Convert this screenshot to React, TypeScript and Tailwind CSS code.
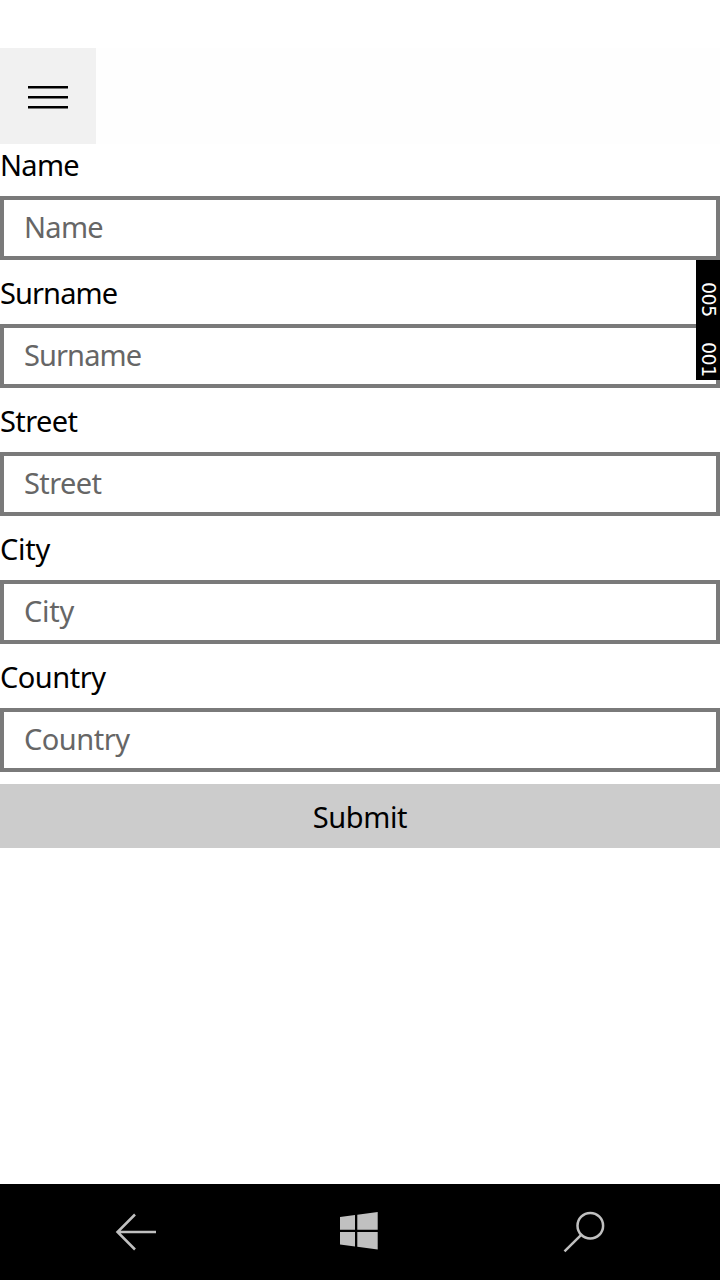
const FIELDS = [
  { label: "Name", tracking: "tracking-[-0.7px]" },
  { label: "Surname", tracking: "tracking-[-0.9px]" },
  { label: "Street", tracking: "tracking-[-0.6px]" },
  { label: "City", tracking: "tracking-[-0.3px]" },
  { label: "Country", tracking: "tracking-[-0.5px]" },
];

function Field({ label, tracking }: { label: string; tracking: string }) {
  return (
    <label className={`block h-32 text-[29px] ${tracking}`}>
      <span className="block h-[52px] leading-[42px]">{label}</span>
      <input
        type="text"
        placeholder={label}
        className={`block h-16 w-full border-4 border-[#7a7a7a] bg-white px-5 pb-1 outline-none placeholder:text-[#666666] ${tracking}`}
      />
    </label>
  );
}

function FrameCounter() {
  return (
    <div className="absolute top-[260px] right-0 flex h-[120px] w-6 gap-[25px] bg-black pt-[22px] pl-px font-['DejaVu_Sans',sans-serif] text-[19px] leading-[23px] tracking-[-0.5px] text-white [writing-mode:vertical-rl]">
      <span className="h-[35px]">005</span>
      <span className="h-[35px]">001</span>
    </div>
  );
}

export default function App() {
  return (
    <div className="relative flex h-[1280px] w-[720px] flex-col overflow-hidden bg-white font-['Noto_Sans',sans-serif] text-black">
      <header className="mt-12 h-24 bg-[#fefefe]">
        <button aria-label="Menu" className="flex size-24 items-center justify-center bg-[#f1f1f1]">
          <svg width="40" height="26" viewBox="0 0 40 26" fill="black">
            <path d="M0 3h40v2.5H0zM0 13h40v2.5H0zM0 23h40v2.5H0z" />
          </svg>
        </button>
      </header>

      <form className="flex flex-col">
        {FIELDS.map((field) => (
          <Field key={field.label} {...field} />
        ))}
        <button type="button" className="h-16 bg-[#cccccc] pt-0.5 text-[29px] leading-[62px] tracking-[-0.4px]">
          Submit
        </button>
      </form>

      <FrameCounter />

      <nav className="mt-auto flex h-24 items-center justify-between bg-black px-[112px] text-[#c0c0c0]">
        <button aria-label="Back">
          <svg width="48" height="48" viewBox="0 0 48 48" fill="none" stroke="currentColor" strokeWidth="2.5">
            <path d="M44 24H5M23 6.5L5.5 24L23 41.5" />
          </svg>
        </button>
        <button aria-label="Start">
          <svg width="48" height="48" viewBox="0 0 48 48" fill="currentColor">
            <path d="M4 9L19 7V21.7H4zM21.3 6.7L41.7 4V21.7H21.3zM4 24H19V38.5L4 36.4zM21.3 24H41.7V41.5L21.3 38.8z" />
          </svg>
        </button>
        <button aria-label="Search">
          <svg width="48" height="48" viewBox="0 0 48 48" fill="none" stroke="currentColor" strokeWidth="2.5">
            <circle cx="30.3" cy="17.7" r="12.8" />
            <path d="M21.2 26.8L4.5 43.3" />
          </svg>
        </button>
      </nav>
    </div>
  );
}
